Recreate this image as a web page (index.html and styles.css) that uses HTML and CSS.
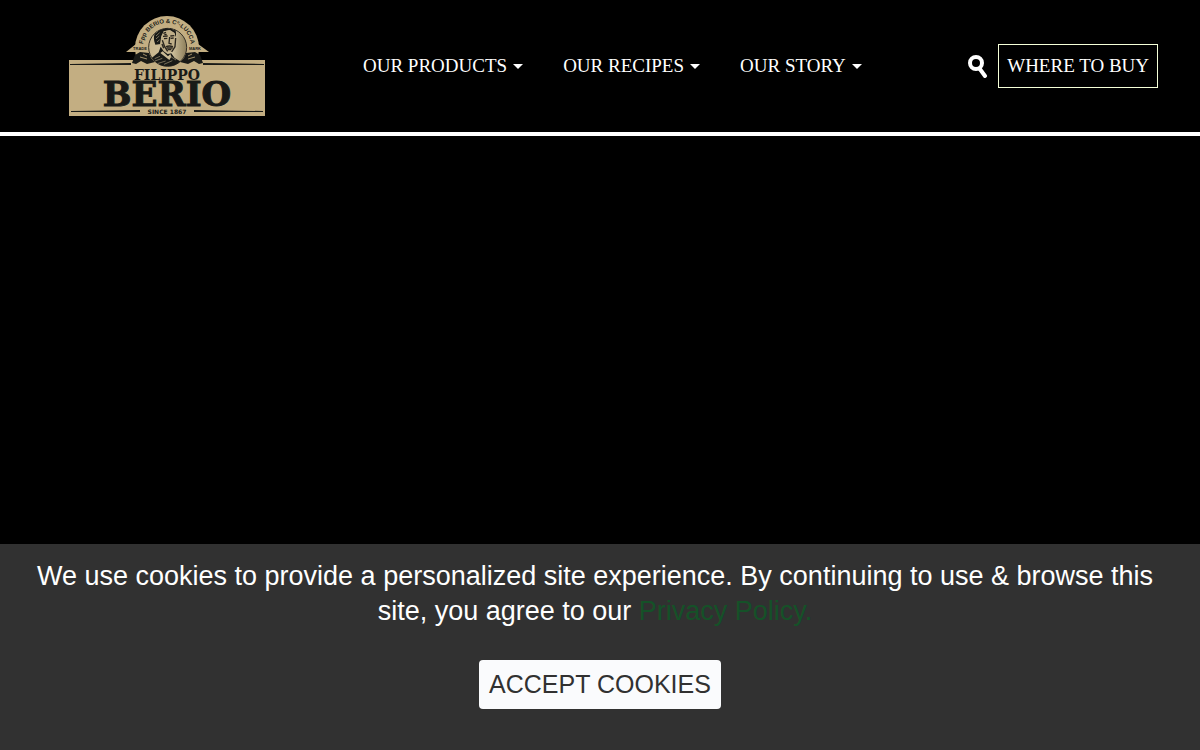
FILE: index.html
```
<!DOCTYPE html>
<html lang="en">
<head>
<meta charset="utf-8">
<meta name="viewport" content="width=device-width, initial-scale=1">
<title>Filippo Berio</title>
<link rel="stylesheet" href="styles.css">
</head>
<body>
<header class="site-header">
  <a class="brand" href="#" aria-label="Filippo Berio home">
    <svg class="logo" viewBox="0 0 196 100" role="img" aria-label="Filippo Berio, since 1867">
      <defs>
        <path id="seal-arc" d="M74 31a24 24 0 0 1 48 0"/>
        <clipPath id="portrait-clip"><circle cx="143" cy="112" r="57"/></clipPath>
        <linearGradient id="portrait-fill"><stop offset="0" stop-color="#c9b68d"/><stop offset=".6" stop-color="#d2c4a0"/><stop offset="1" stop-color="#8c7d59"/></linearGradient>
      </defs>
      <path class="gold" d="M0 44H196V100H0Z"/>
      <circle class="gold" cx="98" cy="32" r="32"/>
      <path class="gold" d="M57 36L67 28H129L140 36Z"/>
      <path class="ink" d="M63 47L66 39L71 36L80 37L82 42L86 46L78 48L72 45L67 48ZM134 47L131 39L126 36L117 37L115 42L111 46L119 48L125 45L130 48Z"/>
      <path class="gold-line" d="M71 41L78 43M74 38L78 40M126 41L119 43M123 38L119 40"/>
      <text class="seal-text"><textPath href="#seal-arc" startOffset="50%">Fpp BERIO &amp; Cº-LUCCA</textPath></text>
      <text class="ribbon-text" x="71" y="34">TRADE</text>
      <text class="ribbon-text" x="126" y="34">MARK</text>
      <g transform="translate(51 -6) scale(.3333)">
        <circle cx="143" cy="112" r="57" fill="url(#portrait-fill)" stroke="#332f26" stroke-width="3"/>
        <g clip-path="url(#portrait-clip)">
          <path class="ink" d="M106 104Q98 86 105 68Q107 51 123 49Q134 39 149 44Q167 47 168 68L168 82L162 69L148 61L131 64L124 82L122 102Z"/>
          <path fill="#bfae88" d="M124 78L132 64L150 60L164 69L168 89L165 111L154 127L139 129L124 117L120 103Z"/>
          <path class="ink" d="M94 145L116 127L122 110L131 124L143 132L154 130L164 144L183 155L165 172H108Z"/>
          <path fill="#c9ba95" d="M121 129L128 124L144 139L151 132L154 140L148 150Z"/>
          <path class="sketch" d="M129 79L143 78M151 78L163 77M132 86L142 85M152 85L161 84M149 81L147 100L155 102M138 110Q148 106 159 110M140 114L158 114M143 119L154 119M127 91L134 110L143 124M126 102L131 115M130 70L138 67M133 74L140 73M167 84L165 110L155 126"/>
          <path class="scratch" d="M107 69L115 62M108 78L119 68M108 87L118 78M111 96L119 89M124 57L135 54M139 51L149 55M154 53L162 61M104 146L120 139M105 153L127 145M112 161L137 153M132 163L157 152M151 139L168 150"/>
        </g>
      </g>
      <path class="ink" d="M1 48L62 47V49L1 49ZM134 47L195 48V49L134 49ZM2 95L71 94V96L2 96ZM125 94L194 95V96L125 96Z"/>
      <text class="name-top" x="98" y="64">FILIPPO</text>
      <text class="name-main" x="98" y="90">BERIO</text>
      <text class="since" x="98" y="98">SINCE 1867</text>
    </svg>
  </a>
  <nav class="main-nav" aria-label="Main">
    <a class="nav-link has-menu" href="#">OUR PRODUCTS</a>
    <a class="nav-link has-menu" href="#">OUR RECIPES</a>
    <a class="nav-link has-menu" href="#">OUR STORY</a>
  </nav>
  <div class="actions">
    <button class="search" type="button" aria-label="Search">
      <svg class="search-icon" viewBox="0 0 20 24" aria-hidden="true"><circle cx="8" cy="9" r="6"/><path d="M11.500 14.500L17 22"/></svg>
    </button>
    <a class="nav-link buy" href="#">WHERE TO BUY</a>
  </div>
</header>
<main class="hero"></main>
<section class="cookies" aria-label="Cookie notice">
  <p class="cookie-text">We use cookies to provide a personalized site experience. By continuing to use &amp; browse this site, you agree to our <a class="policy" href="#">Privacy Policy.</a></p>
  <button class="accept" type="button">ACCEPT COOKIES</button>
</section>
</body>
</html>
```

FILE: styles.css
```
* { box-sizing: border-box; }
body {
  margin: 0;
  min-height: 100vh;
  display: flex;
  flex-direction: column;
  background: #000;
  color: #fff;
  font-family: "Liberation Sans", Arial, sans-serif;
}
.site-header {
  display: flex;
  align-items: center;
  padding: 16px 42px 16px 69px;
  border-bottom: 4px solid #fff;
}
.brand { display: block; flex: none; }
.logo { display: block; width: 196px; height: 100px; }
.gold { fill: #c3ae82; }
.ink { fill: #191a17; }
.gold-line { fill: none; stroke: #a18f69; stroke-width: 1; }
.sketch { fill: none; stroke: #29251e; stroke-width: 4; }
.scratch { fill: none; stroke: #a99b7c; stroke-width: 2; }
.logo text { fill: #191a17; text-anchor: middle; }
.seal-text { font: bold 6px "Liberation Sans", sans-serif; }
.ribbon-text { font: bold 4px "Liberation Sans", sans-serif; }
.name-top { font: bold 14px "DejaVu Serif", serif; }
.name-main { font: bold 34px "DejaVu Serif", serif; stroke: #191a17; stroke-width: 1px; }
.since { font: bold 6px "DejaVu Sans", sans-serif; }

.main-nav {
  display: flex;
  gap: 40px;
  margin-left: 98px;
}
.nav-link {
  color: #fff;
  font-family: "Liberation Serif", "Times New Roman", serif;
  font-size: 19px;
  line-height: 28px;
  text-decoration: none;
  white-space: nowrap;
}
.has-menu {
  display: flex;
  align-items: center;
  gap: 6px;
}
.has-menu::after {
  content: "";
  border: 5px solid transparent;
  border-top-color: #fff;
  border-bottom: 0;
}
.actions {
  display: flex;
  align-items: center;
  gap: 10px;
  margin-left: auto;
}
.search {
  padding: 0;
  border: 0;
  background: none;
  color: #fff;
}
.search-icon {
  display: block;
  width: 20px;
  height: 24px;
  fill: none;
  stroke: currentColor;
  stroke-width: 4;
  stroke-linecap: round;
}
.buy {
  padding: 7px 8px;
  border: 1px solid #f5ffd8;
}
.hero { flex: 1; }

.cookies {
  position: fixed;
  right: 0;
  bottom: 0;
  left: 0;
  padding: 15px 15px 41px;
  background: #313131;
  text-align: center;
}
.cookie-text {
  margin: 0 10px 31px 0;
  font-size: 27px;
  line-height: 35px;
}
.policy { color: #155128; text-decoration: none; }
.accept {
  padding: 9px 10px;
  border: 0;
  border-radius: 4px;
  background: #fafbfd;
  color: #313131;
  font: 25px/31px "Liberation Sans", Arial, sans-serif;
}
```
